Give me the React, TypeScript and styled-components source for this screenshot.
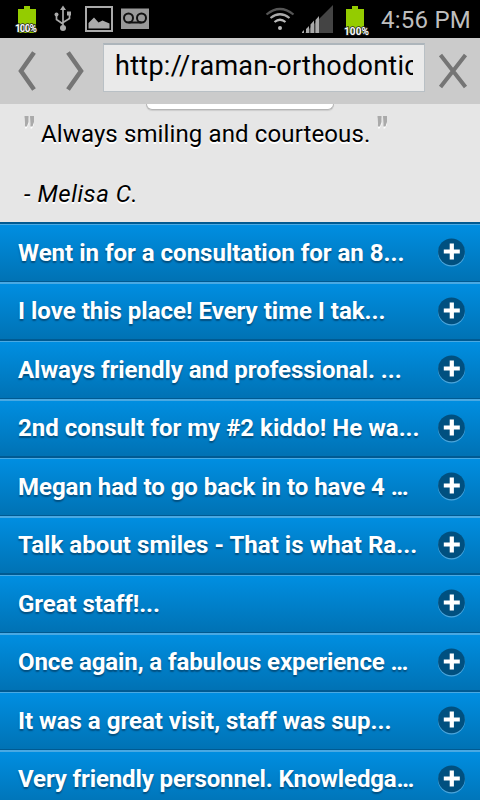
import React from "react";
import styled, { createGlobalStyle } from "styled-components";

const Global = createGlobalStyle`
  body { margin: 0; background: #0077bd; }
  * { box-sizing: border-box; }
`;

const Screen = styled.div`
  width: 480px;
  height: 800px;
  overflow: hidden;
  display: flex;
  flex-direction: column;
  font-family: Roboto, sans-serif;
  color: #000;
  background: #e6e6e6;
`;

const StatusBar = styled.header`
  flex: none;
  height: 38px;
  background: #000;
  display: flex;
  justify-content: space-between;
`;

const Clock = styled.span`
  font-size: 24px;
  line-height: 41px;
  letter-spacing: 0.25px;
  color: #bebebe;
  width: 99px;
  white-space: nowrap;
`;

const StatusRight = styled.div`
  display: flex;
`;

const NavBar = styled.nav`
  flex: none;
  height: 66px;
  background: #cbcbcb;
  display: flex;
  align-items: flex-start;
`;

const AddressBar = styled.div`
  width: 322px;
  height: 49px;
  margin-top: 5px;
  padding: 0 11px;
  background: #eaeaea;
  border: 1px solid #b9c0c5;
  border-top: 2px solid #adb5bb;
`;

const AddressText = styled.div`
  overflow: hidden;
  white-space: nowrap;
  font-size: 27px;
  line-height: 43px;
  letter-spacing: 0.28px;
`;

const Quote = styled.section`
  flex: none;
  height: 118px;
  overflow: hidden;
  padding: 0 24px;
  text-shadow: 0 1.5px 0 #fff;
  font-size: 24px;
`;

const Tab = styled.div`
  width: 188px;
  height: 6px;
  margin-left: 122px;
  background: #fff;
  border: 1px solid #b5b5b5;
  border-top: 0;
  border-radius: 0 0 7px 7px;
  box-shadow: 0 1px 1px #ccc;
`;

const QuoteLine = styled.p`
  margin: 6px 0 0;
  height: 36px;
  line-height: 36px;
  display: flex;
  white-space: nowrap;
`;

const QuoteText = styled.span`
  width: 342px;
  padding-left: 6px;
  letter-spacing: 0.12px;
`;

const Mark = styled.svg`
  flex: none;
  display: block;
`;

const Author = styled.p`
  margin: 24px 0 0;
  line-height: 36px;
  font-style: italic;
  letter-spacing: 0.55px;
`;

const List = styled.ul`
  flex: none;
  margin: 0;
  padding: 0;
  list-style: none;
`;

const Row = styled.li<{ $odd: boolean }>`
  height: ${(p) => (p.$odd ? 58 : 59)}px;
  border-top: ${(p) => (p.$odd ? 1 : 2)}px solid #005a92;
  box-shadow: inset 0 ${(p) => (p.$odd ? 2 : 1)}px 0 #49a9e3;
  background: linear-gradient(#008fe2, #0072b4);
  padding: 0 14px 0 18px;
  display: flex;
  justify-content: space-between;
`;

const Title = styled.span<{ $odd: boolean; $spacing: number }>`
  color: #fff;
  font-size: 24px;
  font-weight: 700;
  line-height: ${(p) => (p.$odd ? 58 : 59)}px;
  letter-spacing: ${(p) => p.$spacing}px;
  white-space: nowrap;
  text-shadow: 0 1.5px 1.5px #004f80;
`;

const PlusIcon = styled.svg<{ $odd: boolean }>`
  flex: none;
  display: block;
  margin-top: ${(p) => (p.$odd ? 15 : 14)}px;
`;

const reviews: [string, number][] = [
  ["Went in for a consultation for an 8...", 0],
  ["I love this place! Every time I tak...", 0],
  ["Always friendly and professional. ...", -0.03],
  ["2nd consult for my #2 kiddo! He wa...", 0],
  ["Megan had to go back in to have 4 …", -0.03],
  ["Talk about smiles - That is what Ra...", 0.05],
  ["Great staff!...", -0.05],
  ["Once again, a fabulous experience …", -0.1],
  ["It was a great visit, staff was sup...", 0],
  ["Very friendly personnel. Knowledga…", -0.12],
];

const BatteryLabel = styled.text`
  font: 700 10px Roboto, sans-serif;
  fill: #fff;
  stroke: #222;
  stroke-width: 1.5px;
  paint-order: stroke;
`;

const StatusIcons = () => (
  <svg width="160" height="38">
    <path d="M24 6h6v3h6v24H18V9h6z" fill="#94cc00" />
    <BatteryLabel x="15" y="31.500" textLength="22">100%</BatteryLabel>
    <g stroke="#aaa" fill="none" strokeWidth="1.7">
      <path d="M63 9v18M56.5 15v4.5l6.5 4.5M69.5 14v4.5L63 22.5" />
    </g>
    <path d="M63 5.5l3 4.5h-6zM67 11.5h4v4h-4z" fill="#aaa" />
    <circle cx="56.5" cy="14.5" r="2" fill="#aaa" />
    <circle cx="63" cy="28" r="3" fill="#aaa" />
    <rect x="86" y="7" width="26" height="24" fill="none" stroke="#aaa" strokeWidth="2" />
    <path d="M88.500 28.500v-5.500l5.500-5.500 4.500 5 4-2 7 3v5z" fill="#aaa" />
    <rect x="121" y="8.500" width="28" height="20.500" fill="#999" />
    <g fill="none" stroke="#111" strokeWidth="2">
      <circle cx="128.500" cy="18" r="4.500" />
      <circle cx="141.500" cy="18" r="4.500" />
      <path d="M128.500 22.500h13" />
    </g>
  </svg>
);

const SignalIcons = () => (
  <svg width="120" height="38">
    <g fill="none" strokeWidth="2.200">
      <path d="M5.500 14.500Q19 3.500 32.500 14.500" stroke="#555" />
      <path d="M9.500 18Q19 10.500 28.500 18" stroke="#aaa" />
      <path d="M13.500 22Q19 17.500 24.500 22" stroke="#bbb" />
    </g>
    <circle cx="19" cy="28" r="2" fill="#bbb" />
    <path d="M72 5v28H44z" fill="#444" />
    <path d="M45 33v-1l2-2v3zM49 33v-4l3-3v7zM53.500 33v-8.500l3.500-4V33zM58.500 33V20l3.500-4v17z" fill="#aaa" transform="translate(-4 0)" />
    <path d="M91 6h6v3h6v24H85V9h6z" fill="#94cc00" />
    <BatteryLabel x="83" y="34.500" textLength="25">100%</BatteryLabel>
  </svg>
);

const QuoteMark = () => (
  <Mark width="11" height="36" viewBox="0 0 11 36">
    <path d="M1 2h4v6.500l-2 4H1.500l.5-4H1zM6.500 2h4v6.500l-2 4H7l.5-4h-1z" fill="#fff" transform="translate(-.5 0)" />
    <path d="M.5 0h4v6l-1.500 4.500H1zM6 0h4v6l-1.500 4.500h-2z" fill="#aaa" />
  </Mark>
);

const Plus = ({ odd }: { odd: boolean }) => (
  <PlusIcon width="30" height="30" $odd={odd}>
    <circle cx="15.500" cy="15" r="13.500" fill="#4ba6dc" />
    <circle cx="15.500" cy="13.800" r="13.400" fill="#005080" />
    <path d="M15.800 5.500v16M7.800 13.500h16" stroke="#fff" strokeWidth="4.200" />
  </PlusIcon>
);

export default function App() {
  return (
    <Screen>
      <Global />
      <StatusBar>
        <StatusIcons />
        <StatusRight>
          <SignalIcons />
          <Clock>4:56 PM</Clock>
        </StatusRight>
      </StatusBar>
      <NavBar>
        <svg width="103" height="66" fill="none" stroke="#757575" strokeWidth="4.500">
          <path d="M34 14.500L21 33l13 18.500M68 14.500L81 33 68 51.500" />
        </svg>
        <AddressBar>
          <AddressText>http://raman-orthodontics.com</AddressText>
        </AddressBar>
        <svg width="55" height="66" stroke="#757575" strokeWidth="4">
          <path d="M15.500 17l25 32M40.500 17l-25 32" />
        </svg>
      </NavBar>
      <Quote>
        <Tab />
        <QuoteLine>
          <QuoteMark />
          <QuoteText>Always smiling and courteous.</QuoteText>
          <QuoteMark />
        </QuoteLine>
        <Author>- Melisa C.</Author>
      </Quote>
      <List>
        {reviews.map(([text, spacing], i) => (
          <Row key={text} $odd={i % 2 === 1}>
            <Title $odd={i % 2 === 1} $spacing={spacing}>
              {text}
            </Title>
            <Plus odd={i % 2 === 1} />
          </Row>
        ))}
      </List>
    </Screen>
  );
}
